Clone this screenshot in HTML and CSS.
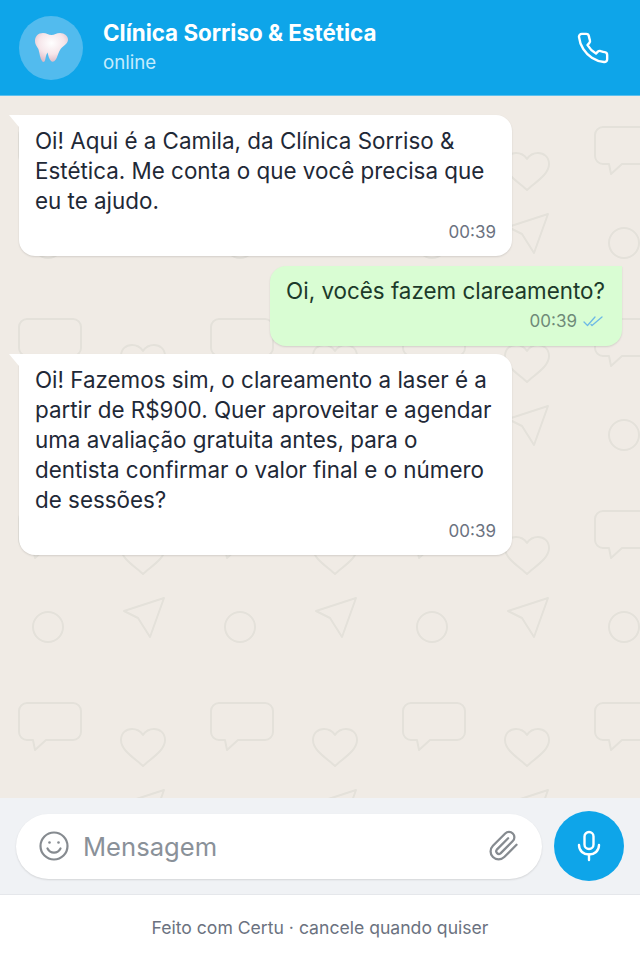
FILE: index.html
```html
<!DOCTYPE html>
<html lang="pt-BR">
<head>
    <meta charset="UTF-8">
    <meta name="viewport" content="width=device-width, initial-scale=1.0">
    <title>Clínica Sorriso & Estética</title>
    <link rel="stylesheet" href="styles.css">
</head>
<body>

<div class="app">
    <header class="chat-header">
        <div class="avatar">
            <svg width="33" height="29" viewBox="0 0 33 29">
                <defs>
                    <radialGradient id="tooth" cx="0.5" cy="0.35" r="0.7">
                        <stop offset="0" stop-color="#ffffff"/>
                        <stop offset="0.55" stop-color="#f6e6ea"/>
                        <stop offset="1" stop-color="#d9b4c2"/>
                    </radialGradient>
                </defs>
                <path fill="url(#tooth)" d="M8 0C3 0 0 3.500 0 8c0 4 2.500 6 3.500 8.500C4.500 20 5 25 7 28c1 1.300 2.500 1.200 3-.5.7-2.500 1-6 2.500-8 .8 3 1.500 6.500 3.500 8.500 1 1 2.300.8 3.500 0 2-1.700 2.500-4 3.500-6.500.8-2 1.500-4 3-6 2.500-2.500 7-5 7-9C33 3 29.500 0 25 0c-3.500 0-5.500 2-8.500 2S11.500 0 8 0z"/>
            </svg>
        </div>
        <div class="contact">
            <div class="contact-name">Clínica Sorriso &amp; Estética</div>
            <div class="contact-status">online</div>
        </div>
        <svg class="call-icon" width="34" height="34" viewBox="0 0 24 24" fill="none" stroke="#fff" stroke-width="1.700" stroke-linecap="round" stroke-linejoin="round">
            <path d="M22 16.900v3a2 2 0 0 1-2.200 2 19.800 19.800 0 0 1-8.600-3.100 19.500 19.500 0 0 1-6-6 19.800 19.800 0 0 1-3.100-8.700A2 2 0 0 1 4.100 2h3a2 2 0 0 1 2 1.700c.1 1 .4 1.900.7 2.800a2 2 0 0 1-.5 2.100L8.100 9.900a16 16 0 0 0 6 6l1.300-1.300a2 2 0 0 1 2.100-.4c.9.300 1.800.6 2.800.7a2 2 0 0 1 1.700 2z"/>
        </svg>
    </header>

    <main class="chat">
        <svg class="chat-pattern" width="100%" height="100%">
            <defs>
                <pattern id="doodles" width="192" height="192" patternUnits="userSpaceOnUse">
                    <g fill="none" stroke="#e4e1da" stroke-width="2" stroke-linejoin="round">
                        <circle cx="48" cy="147" r="15"/>
                        <path d="M124 131L164 118L150 157L138 138z"/>
                        <path d="M27 31H73a8 8 0 0 1 8 8V60a8 8 0 0 1-8 8H46L35 78L33 68H27a8 8 0 0 1-8-8V39a8 8 0 0 1 8-8z"/>
                        <path d="M143 94C136 87 121 79 121 68C121 61 126 57 132 57C137 57 141 60 143 63C145 60 149 57 154 57C160 57 165 61 165 68C165 79 150 87 143 94z"/>
                    </g>
                </pattern>
            </defs>
            <rect width="100%" height="100%" fill="url(#doodles)"/>
        </svg>

        <div class="msg msg-in">
            <p>Oi! Aqui é a Camila, da Clínica Sorriso &amp; Estética. Me conta o que você precisa que eu te ajudo.</p>
            <div class="msg-meta"><span>00:39</span></div>
        </div>

        <div class="msg msg-out">
            <p>Oi, vocês fazem clareamento?</p>
            <div class="msg-meta">
                <span>00:39</span>
                <svg width="22" height="12" viewBox="0 0 22 12" fill="none" stroke="#6db9e6" stroke-width="1.300" stroke-linecap="round" stroke-linejoin="round">
                    <path d="M1 7l3.500 3.500L12 2"/>
                    <path d="M8 9.500l1 1L19 2"/>
                </svg>
            </div>
        </div>

        <div class="msg msg-in">
            <p>Oi! Fazemos sim, o clareamento a laser é a partir de R$900. Quer aproveitar e agendar uma avaliação gratuita antes, para o dentista confirmar o valor final e o número de sessões?</p>
            <div class="msg-meta"><span>00:39</span></div>
        </div>
    </main>

    <div class="composer">
        <div class="composer-input">
            <svg width="32" height="32" viewBox="0 0 32 32" fill="none" stroke="#868b90" stroke-width="2.200" stroke-linecap="round">
                <circle cx="16" cy="16" r="13.500"/>
                <path d="M9.500 18.500c1.500 3 4 4.200 6.500 4.200s5-1.200 6.500-4.200"/>
                <circle cx="11.500" cy="12.500" r="1.300" fill="#868b90" stroke="none"/>
                <circle cx="20.500" cy="12.500" r="1.300" fill="#868b90" stroke="none"/>
            </svg>
            <span class="composer-placeholder">Mensagem</span>
            <svg width="32" height="32" viewBox="0 0 24 24" fill="none" stroke="#868b90" stroke-width="1.700" stroke-linecap="round" stroke-linejoin="round">
                <path d="M21.400 11.100l-9.200 9.200a6 6 0 0 1-8.500-8.500l9.200-9.200a4 4 0 0 1 5.700 5.700l-9.200 9.200a2 2 0 0 1-2.800-2.800l8.500-8.500"/>
            </svg>
        </div>
        <button class="mic-btn">
            <svg width="28" height="32" viewBox="0 0 28 32" fill="none" stroke="#fff" stroke-width="2.400" stroke-linecap="round">
                <rect x="9.500" y="2" width="9" height="17" rx="4.500"/>
                <path d="M4 15c0 6 4.500 9.500 10 9.500S24 21 24 15"/>
                <path d="M14 24.500V30"/>
            </svg>
        </button>
    </div>

    <footer class="footer">Feito com Certu · cancele quando quiser</footer>
</div>

</body>
</html>
```

FILE: styles.css
```css
* { margin: 0; padding: 0; box-sizing: border-box; font-family: 'Inter', 'Liberation Sans', sans-serif; }
body { background: #fff; }
.app { display: flex; flex-direction: column; width: 640px; height: 960px; overflow: hidden; }

.chat-header { display: flex; align-items: center; height: 96px; flex-shrink: 0; padding: 0 30px 0 19px; background: #0ea5e9; color: #fff; border-bottom: 1px solid #5cc0ee; }
.avatar { display: flex; align-items: center; justify-content: center; width: 64px; height: 64px; border-radius: 50%; background: #52bbee; flex-shrink: 0; }
.contact { flex: 1; margin-left: 20px; }
.contact-name { font-size: 22.4px; font-weight: 700; line-height: 30px; }
.contact-status { font-size: 18.700px; line-height: 30px; color: #c5ecfd; }

.chat { position: relative; flex: 1; display: flex; flex-direction: column; gap: 10px; padding: 19px 18px 0 19px; background: #f0ebe5; }
.chat-pattern { position: absolute; top: 0; left: 0; }
.msg { position: relative; padding: 11px 16px 12px 16px; font-size: 22.4px; line-height: 30px; color: #1f2937; border-radius: 16px; box-shadow: 0 1px 2px rgba(0,0,0,0.12); }
.msg-in { align-self: flex-start; width: 493px; background: #fff; border-top-left-radius: 0; }
.msg-in::before { content: ""; position: absolute; top: 0; left: -10px; border-top: 12px solid #fff; border-left: 10px solid transparent; }
.msg-out { align-self: flex-end; margin-bottom: -2px; padding: 10px 17px 13px 16px; background: #d9fdd3; color: #1c3a2a; border-top-right-radius: 0; }
.msg-meta { display: flex; align-items: center; justify-content: flex-end; gap: 6px; margin-top: 4px; font-size: 17px; line-height: 24px; color: #6b7280; }
.msg-out .msg-meta { margin-top: 3px; color: #6f8a78; }

.composer { display: flex; align-items: center; gap: 12px; height: 97px; flex-shrink: 0; padding: 0 16px; background: #f0f2f5; border-bottom: 1px solid #e5e7eb; }
.composer-input { flex: 1; display: flex; align-items: center; height: 65px; padding: 0 22px; background: #fff; border-radius: 33px; box-shadow: 0 1px 2px rgba(0,0,0,0.12); }
.composer-placeholder { flex: 1; margin-left: 13px; font-size: 25.6px; color: #8a9199; }
.mic-btn { display: flex; align-items: center; justify-content: center; width: 70px; height: 70px; border: none; border-radius: 50%; background: #0ea5e9; }

.footer { flex-shrink: 0; display: flex; align-items: center; justify-content: center; height: 65px; background: #fff; font-size: 17.600px; color: #6b7280; }
```
